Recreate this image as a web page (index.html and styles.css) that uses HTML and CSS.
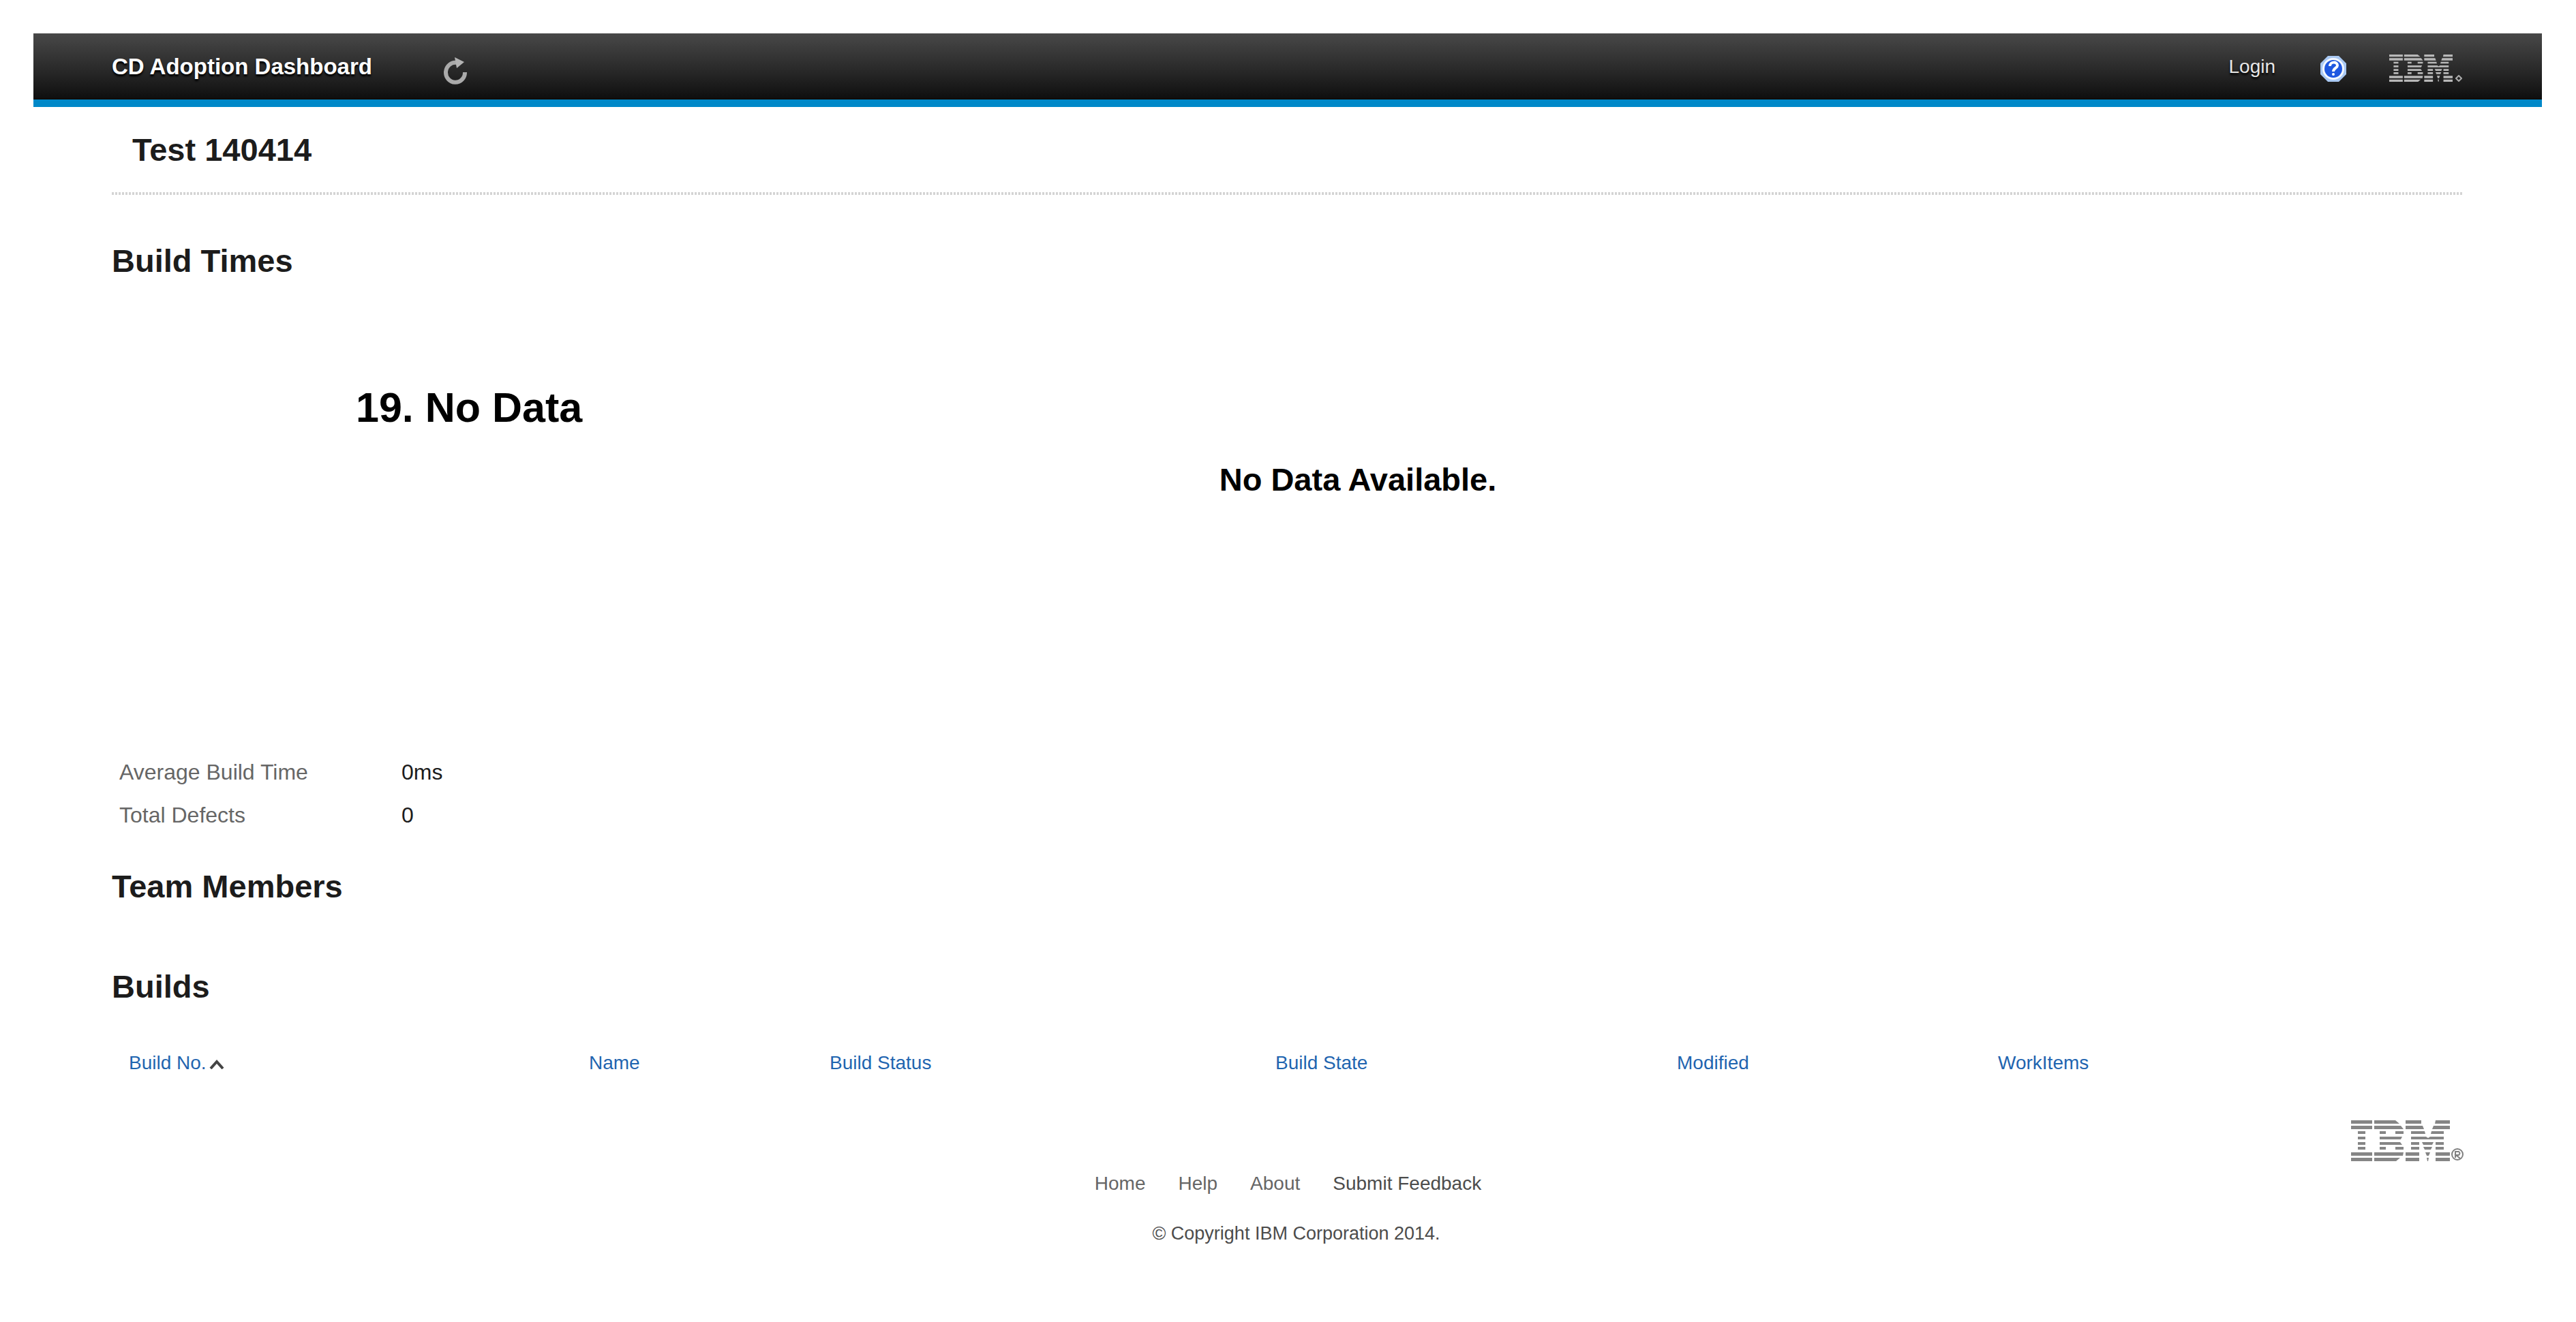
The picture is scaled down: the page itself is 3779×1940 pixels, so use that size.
FILE: index.html
```html
<!DOCTYPE html>
<html lang="en">
<head>
<meta charset="utf-8">
<title>CD Adoption Dashboard</title>
<link rel="stylesheet" href="styles.css">
</head>
<body>
<svg class="defs" aria-hidden="true">
  <symbol id="ibm" viewBox="0 0 145 60">
    <path d="M0 0h31v5H0zM0 8h31v5H0zM10 16h11v4H10zM10 24h11v4H10zM10 32h11v4H10zM10 39h11v4H10zM0 47h31v5H0zM0 55h31v5H0z"/>
    <path d="M34 0h31l6 5H34zM34 8h39l4 5H34zM42 16h9v4h-9zM65 16h12v4H65zM42 24h33l-2 4H42zM42 32h30l3 4H42zM42 39h9v4h-9zM65 39h12v4H65zM34 47h43l-1 5H34zM34 55h38l-6 5H34z"/>
    <path d="M80 0h23v5H80zM124 0h21v5h-22zM80 8h25l2 5H80zM121 8h24v5h-26zM88 16h20l1 4H88zM118 16h18v4h-19zM88 24h22l3 2 3-2h20v4H88zM88 32h12v4H88zM104 32h17l-2 4h-13zM124 32h12v4h-12zM88 39h12v4H88zM106 39h13l-2 4h-9zM124 39h12v4h-12zM80 47h20v5H80zM109 47h7l-2 5h-3zM124 47h21v5h-21zM80 55h20v5H80zM111 55h3l-1 5h-1zM124 55h21v5h-21z"/>
  </symbol>
</svg>
<header class="banner">
  <div class="brand">
    <a class="brand-name" href="#">CD Adoption Dashboard</a>
    <button class="icon-button" type="button" aria-label="Refresh">
      <svg class="refresh" viewBox="0 0 36 40"><path d="M19 8A14 14.500 0 1 0 31 22" fill="none" stroke="#aaa" stroke-width="6"/><path d="M16 0l14 7-11 9z" fill="#b4b4b4"/></svg>
    </button>
  </div>
  <div class="tools">
    <a class="login" href="#">Login</a>
    <a class="help" href="#" aria-label="Help">
      <svg class="help-icon" viewBox="0 0 38 38"><path d="M11 0h16l11 11v16L27 38H11L0 27V11z" fill="#a9c8f2"/><circle cx="19" cy="19" r="16" fill="#f4f8ff"/><circle cx="19" cy="19" r="13" fill="#1f58e0"/><path d="M14 15c0-7 11-7 11-1 0 4-6 4-6 9" fill="none" stroke="#fff" stroke-width="4"/><circle cx="19" cy="27" r="2" fill="#fff"/></svg>
    </a>
    <span class="logo-small"><svg class="mark-small" preserveAspectRatio="none" viewBox="0 0 145 60" role="img" aria-label="IBM"><use href="#ibm"/></svg><svg class="reg-small" viewBox="0 0 10 10"><path d="M5 1l4 4-4 4-4-4z" fill="none" stroke="#aaa" stroke-width="2"/></svg></span>
  </div>
</header>
<main class="page">
  <h1 class="page-title">Test 140414</h1>
  <section>
    <h2 class="heading build-times">Build Times</h2>
    <div class="chart">
      <p class="note">19. No Data</p>
      <p class="empty">No Data Available.</p>
    </div>
    <dl class="stats">
      <dt>Average Build Time</dt><dd>0ms</dd>
      <dt>Total Defects</dt><dd>0</dd>
    </dl>
  </section>
  <h2 class="heading members">Team Members</h2>
  <h2 class="heading">Builds</h2>
  <table class="builds">
    <colgroup><col class="c-no"><col class="c-name"><col class="c-status"><col class="c-state"><col class="c-modified"><col class="c-items"></colgroup>
    <thead>
      <tr>
        <th scope="col"><a href="#">Build No.</a><svg class="caret" viewBox="0 0 22 14"><path d="M2 13l9-10 9 10" fill="none" stroke="#444" stroke-width="4"/></svg></th>
        <th scope="col"><a href="#">Name</a></th>
        <th scope="col"><a href="#">Build Status</a></th>
        <th scope="col"><a href="#">Build State</a></th>
        <th scope="col"><a href="#">Modified</a></th>
        <th scope="col"><a href="#">WorkItems</a></th>
      </tr>
    </thead>
  </table>
</main>
<footer class="footer">
  <div class="logo-large"><svg class="mark-large" viewBox="0 0 145 60" role="img" aria-label="IBM"><use href="#ibm"/></svg><svg class="reg-large" viewBox="0 0 20 20"><circle cx="10" cy="10" r="8" fill="none" stroke="#808080" stroke-width="2"/><path d="M7 15V6h5q3 2 0 5H8l6 5" fill="none" stroke="#808080" stroke-width="2"/></svg></div>
  <nav class="links">
    <a href="#">Home</a>
    <a href="#">Help</a>
    <a href="#">About</a>
    <a class="feedback" href="#">Submit Feedback</a>
  </nav>
  <p class="copyright">© Copyright IBM Corporation 2014.</p>
</footer>
</body>
</html>
```
FILE: styles.css
```css
* {
  box-sizing: border-box;
}

body {
  margin: 0;
  padding: 49px 50px 0 49px;
  background: #fff;
  color: #1c1c1c;
  font-family: "Liberation Sans", Arial, sans-serif;
  font-size: 28px;
  line-height: 32px;
}

h1, h2, p, dl, dd {
  margin: 0;
}

a {
  color: inherit;
  text-decoration: none;
}

svg {
  display: block;
}

.defs {
  position: absolute;
  width: 0;
  height: 0;
}

.banner {
  display: flex;
  justify-content: space-between;
  height: 108px;
  padding: 0 117px 0 115px;
  border-bottom: 11px solid #0088c8;
  background: linear-gradient(#484848, #2c2c2c 50%, #101010 97%, #100800);
}

.brand,
.tools {
  display: flex;
  align-items: center;
}

.brand {
  gap: 105px;
}

.brand-name {
  color: #fff;
  font-size: 33px;
  font-weight: bold;
  text-shadow: 0 3px 3px #000;
}

.icon-button {
  padding: 12px 0 0;
  border: 0;
  background: none;
}

.refresh {
  width: 36px;
  height: 40px;
}

.login {
  margin-right: 66px;
  color: #e6e6e6;
  text-shadow: 0 3px 3px #000;
}

.help {
  margin-right: 63px;
  padding-top: 6px;
}

.help-icon {
  width: 38px;
  height: 38px;
}

.logo-small {
  display: flex;
  align-items: flex-end;
  gap: 4px;
  padding-top: 4px;
}

.mark-small {
  width: 93px;
  height: 40px;
  fill: #b8b8b8;
}

.reg-small {
  width: 10px;
  height: 10px;
}

.page {
  padding: 0 117px 0 115px;
}

.page-title {
  padding: 34px 30px 37px;
  font-size: 47px;
  line-height: 58px;
  background: repeating-linear-gradient(90deg, #d4d4d4 0 3px, #fff 3px 5px) bottom / 100% 4px no-repeat;
}

.heading {
  font-size: 47px;
  line-height: 58px;
}

.build-times {
  padding-top: 68px;
}

.chart {
  display: grid;
  align-content: start;
  height: 690px;
  padding-top: 151px;
  color: #000;
  font-weight: bold;
}

.note {
  padding-left: 358px;
  font-size: 61px;
  line-height: 70px;
}

.empty {
  padding: 42px 0 0 208px;
  text-align: center;
  font-size: 47px;
  line-height: 58px;
}

.stats {
  display: grid;
  grid-template-columns: 414px 1fr;
  padding-left: 11px;
  font-size: 32px;
  line-height: 63px;
}

.stats dt {
  color: #666;
}

.members {
  padding: 44px 0 89px;
}

.builds {
  width: 100%;
  margin-top: 67px;
  border-collapse: collapse;
  table-layout: fixed;
  color: #1f65b0;
}

.builds th {
  padding: 0 0 0 25px;
  font-weight: normal;
  text-align: left;
}

.caret {
  display: inline-block;
  width: 22px;
  height: 14px;
  margin-left: 4px;
}

.c-no { width: 675px; }
.c-name { width: 353px; }
.c-status { width: 654px; }
.c-state { width: 589px; }
.c-modified { width: 471px; }

.footer {
  padding: 68px 114px 0 115px;
  color: #666;
}

.logo-large {
  display: flex;
  justify-content: flex-end;
  align-items: flex-end;
  gap: 1px;
}

.mark-large {
  width: 145px;
  height: 60px;
  fill: #858585;
}

.reg-large {
  width: 20px;
  height: 20px;
}

.links {
  display: flex;
  justify-content: center;
  gap: 48px;
  padding-top: 17px;
}

.feedback {
  color: #4c4c4c;
}

.copyright {
  padding: 41px 0 0 24px;
  color: #4c4c4c;
  font-size: 27px;
  text-align: center;
}
```
